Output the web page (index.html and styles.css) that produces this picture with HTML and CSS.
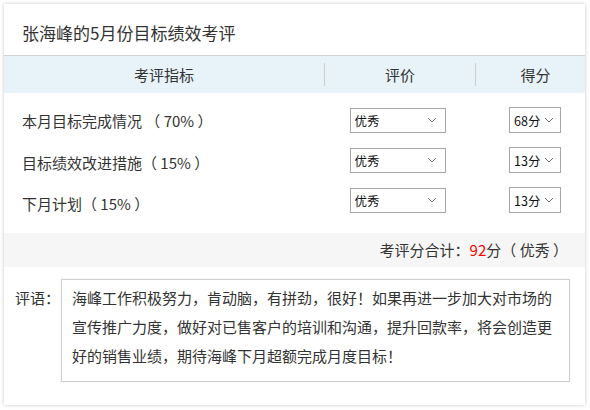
FILE: index.html
```html
<!DOCTYPE html>
<html lang="zh-CN">
<head>
<meta charset="utf-8">
<title>绩效考评</title>
<link rel="stylesheet" href="styles.css">
</head>
<body>
<div class="card">
  <div class="title">张海峰的5月份目标绩效考评</div>
  <div class="thead">
    <div class="th"><span>考评指标</span></div>
    <div class="th sep"><span>评价</span></div>
    <div class="th sep col3"><span>得分</span></div>
  </div>
  <div class="rows">
    <div class="row">
      <div class="label l1">本月目标完成情况 （ 70% ）</div>
      <div class="cell"><div class="sel wide"><span>优秀</span><svg width="10" height="6" viewBox="0 0 10 6"><path d="M1 1l4 4 4-4" fill="none" stroke="#6f6f6f" stroke-width="1"/></svg></div></div>
      <div class="cell col3"><div class="sel narrow"><span>68分</span><svg width="10" height="6" viewBox="0 0 10 6"><path d="M1 1l4 4 4-4" fill="none" stroke="#6f6f6f" stroke-width="1"/></svg></div></div>
    </div>
    <div class="row">
      <div class="label l2">目标绩效改进措施（ 15% ）</div>
      <div class="cell"><div class="sel wide"><span>优秀</span><svg width="10" height="6" viewBox="0 0 10 6"><path d="M1 1l4 4 4-4" fill="none" stroke="#6f6f6f" stroke-width="1"/></svg></div></div>
      <div class="cell col3"><div class="sel narrow"><span>13分</span><svg width="10" height="6" viewBox="0 0 10 6"><path d="M1 1l4 4 4-4" fill="none" stroke="#6f6f6f" stroke-width="1"/></svg></div></div>
    </div>
    <div class="row">
      <div class="label l3">下月计划（ 15% ）</div>
      <div class="cell"><div class="sel wide"><span>优秀</span><svg width="10" height="6" viewBox="0 0 10 6"><path d="M1 1l4 4 4-4" fill="none" stroke="#6f6f6f" stroke-width="1"/></svg></div></div>
      <div class="cell col3"><div class="sel narrow"><span>13分</span><svg width="10" height="6" viewBox="0 0 10 6"><path d="M1 1l4 4 4-4" fill="none" stroke="#6f6f6f" stroke-width="1"/></svg></div></div>
    </div>
  </div>
  <div class="total">考评分合计：<span class="red">92</span>分（ 优秀 ）</div>
  <div class="comment">
    <div class="clabel">评语：</div>
    <div class="cbox">海峰工作积极努力，肯动脑，有拼劲，很好！如果再进一步加大对市场的宣传推广力度，做好对已售客户的培训和沟通，提升回款率，将会创造更好的销售业绩，期待海峰下月超额完成月度目标！</div>
  </div>
</div>
</body>
</html>
```

FILE: styles.css
```css
* { box-sizing: border-box; }
html, body { margin: 0; padding: 0; background: #fff; }
body {
  font-family: "Noto Sans CJK SC", "Noto Sans", sans-serif;
  color: #333;
  padding: 4px 5px 5px 4px;
}
.card {
  width: 581px;
  height: 401px;
  background: #fff;
  box-shadow: 0 0 4px rgba(0,0,0,0.22);
}
.title {
  height: 52px;
  padding: 6px 0 0 18px;
  line-height: 45px;
  font-size: 17px;
  border-bottom: 1px solid #cfd3d6;
}
.thead {
  display: grid;
  grid-template-columns: 320px 151px 1fr;
  background: #e8f2f9;
  padding: 7px 0;
  height: 37px;
}
.th {
  height: 23px;
  display: flex;
  align-items: center;
  justify-content: center;
  font-size: 15px;
  line-height: 23px;
}
.th.sep { border-left: 1px solid #cccccc; }
.col3 { padding-left: 10px; }
.rows {
  height: 140px;
  padding-top: 7px;
}
.row {
  display: grid;
  grid-template-columns: 320px 151px 1fr;
  height: 40px;
  align-items: center;
}
.label {
  padding-left: 18px;
  font-size: 15px;
  line-height: 20px;
}
.l1 { margin-top: 2px; }
.l2 { margin-top: 5px; }
.l3 { margin-top: 7px; }
.cell {
  display: flex;
  justify-content: center;
}
.sel {
  height: 25px;
  border: 1px solid #a6a6a6;
  background: #fff;
  display: flex;
  align-items: center;
  justify-content: space-between;
  padding: 0 8px 0 4px;
  font-size: 12.5px;
  color: #111;
}
.sel svg { display: block; }
.wide { width: 96px; margin-left: -4px; }
.narrow { width: 52px; height: 26px; padding-right: 6px; }
.total {
  height: 34px;
  background: #f6f6f6;
  text-align: right;
  padding-right: 17px;
  font-size: 15px;
  line-height: 34px;
}
.red { color: #f00; }
.comment {
  display: flex;
  align-items: flex-start;
  padding: 12px 0 0 11px;
}
.clabel {
  width: 46px;
  font-size: 15px;
  line-height: 29px;
  padding-top: 4px;
}
.cbox {
  width: 509px;
  height: 103px;
  border: 1px solid #cfcfcf;
  box-shadow: 0 0 2px rgba(0,0,0,0.08);
  padding: 3px 15px 0 10px;
  font-size: 15px;
  line-height: 29px;
}
```
